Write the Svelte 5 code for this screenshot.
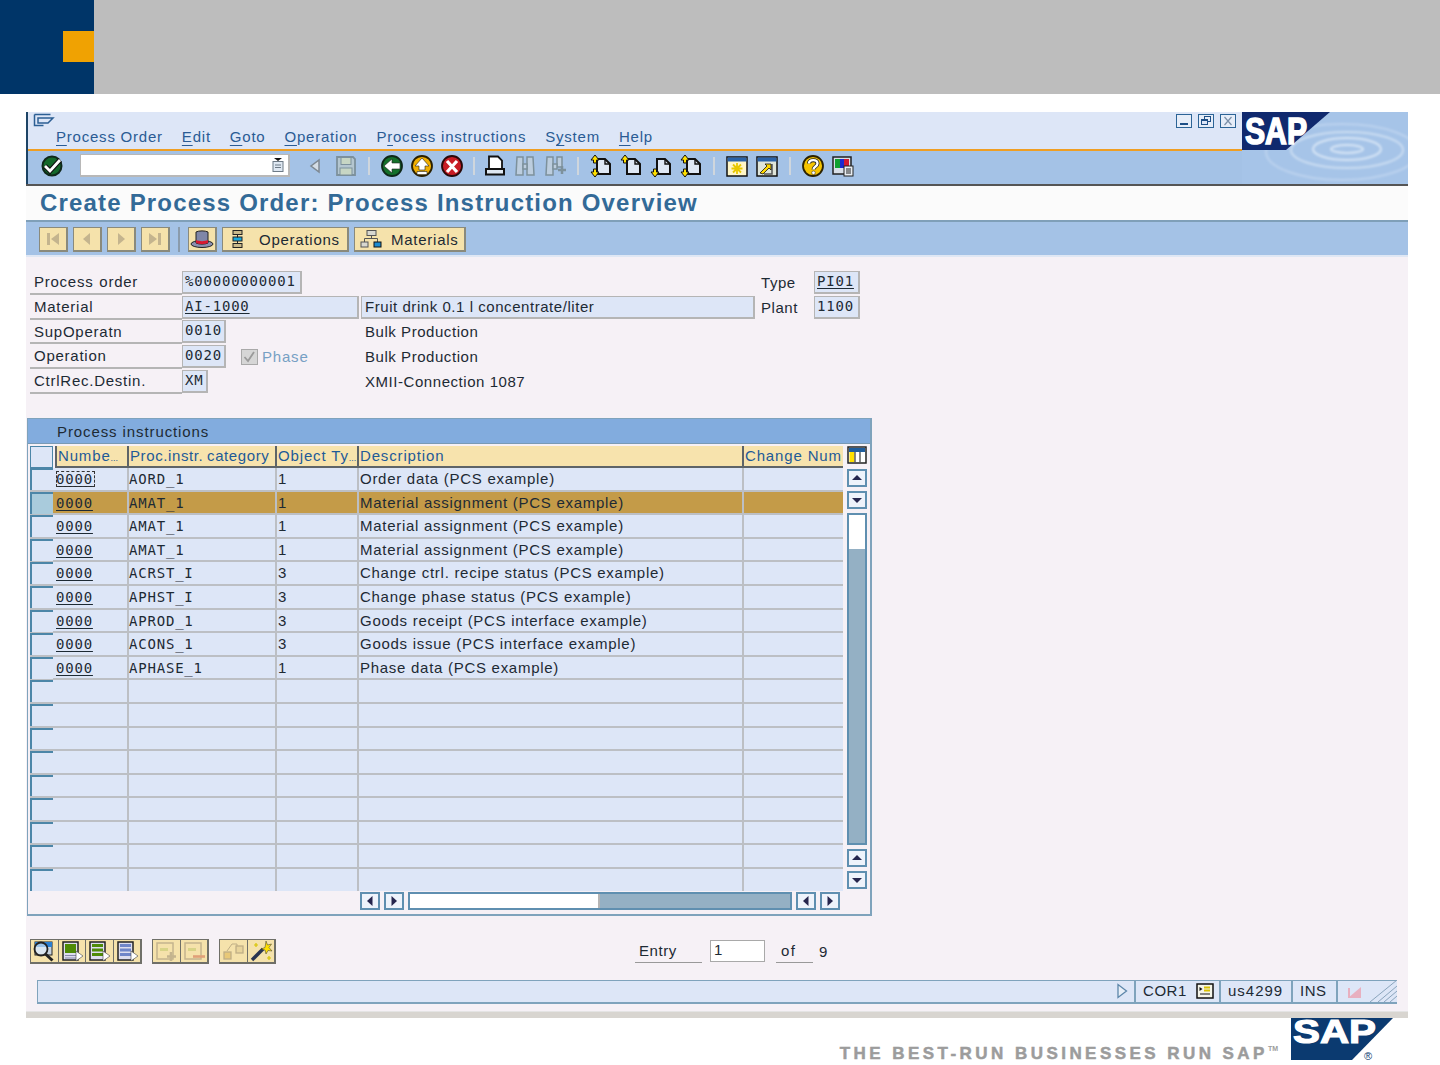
<script>
  const rows = [
    ["0000", "AORD_1", "1", "Order data (PCS example)"],
    ["0000", "AMAT_1", "1", "Material assignment (PCS example)"],
    ["0000", "AMAT_1", "1", "Material assignment (PCS example)"],
    ["0000", "AMAT_1", "1", "Material assignment (PCS example)"],
    ["0000", "ACRST_I", "3", "Change ctrl. recipe status (PCS example)"],
    ["0000", "APHST_I", "3", "Change phase status (PCS example)"],
    ["0000", "APROD_1", "3", "Goods receipt (PCS interface example)"],
    ["0000", "ACONS_1", "3", "Goods issue (PCS interface example)"],
    ["0000", "APHASE_1", "1", "Phase data (PCS example)"],
    ["", "", "", ""],
    ["", "", "", ""],
    ["", "", "", ""],
    ["", "", "", ""],
    ["", "", "", ""],
    ["", "", "", ""],
    ["", "", "", ""],
    ["", "", "", ""],
    ["", "", "", ""],
  ];
  const selected = 1;
</script>

{#snippet page(top, bottom)}
  <svg width="24" height="24" viewBox="0 0 24 24">
    <path d="M8 5h8l5 5v10H8z" fill="#dfe8f5" stroke="#111" stroke-width="2" />
    <path d="M16 5v5h5" fill="none" stroke="#111" stroke-width="1.400" />
    {#if top}
      <path d="M6 1L2 6h2.500v3h3V6H10z" fill="#ffe000" stroke="#111" />
    {/if}
    {#if bottom}
      <path d="M6 23l-4-5h2.500v-3h3v3H10z" fill="#ffe000" stroke="#111" />
    {/if}
  </svg>
{/snippet}

{#snippet sbtn(dir)}
  <span class="sbtn">
    <svg width="14" height="12" viewBox="0 0 14 12">
      {#if dir === "up"}<path d="M2 8l5-5 5 5z" fill="#26264e" />{/if}
      {#if dir === "down"}<path d="M2 4l5 5 5-5z" fill="#26264e" />{/if}
      {#if dir === "left"}<path d="M9.500 1L4 6l5.500 5z" fill="#26264e" />{/if}
      {#if dir === "right"}<path d="M4.500 1L10 6l-5.500 5z" fill="#26264e" />{/if}
    </svg>
  </span>
{/snippet}

{#snippet navBtn(d)}
  <button class="tbtn nav">
    <svg width="20" height="18" viewBox="0 0 20 18"><path {d} fill="#c4b48e" /></svg>
  </button>
{/snippet}

<div class="page">
  <header class="banner"><div class="banner-blue"><span class="banner-square"></span></div></header>

  <main class="window">
    <div class="top">
      <div class="top-left">
        <div class="menubar">
          <svg class="menu-icon" width="22" height="14" viewBox="0 0 22 14">
            <path d="M1.500 1.500h16M1.500 1.500v11h9M5 5h15l-5 5H5z" fill="none" stroke="#2c5f94" stroke-width="1.500" />
          </svg>
          <nav class="menus">
            <span><u>P</u>rocess Order</span>
            <span><u>E</u>dit</span>
            <span><u>G</u>oto</span>
            <span><u>O</u>peration</span>
            <span>P<u>r</u>ocess instructions</span>
            <span>S<u>y</u>stem</span>
            <span><u>H</u>elp</span>
          </nav>
          <div class="win-btns">
            <span class="win-btn"><svg width="14" height="12" viewBox="0 0 14 12"><rect x="3" y="8" width="8" height="2" fill="#1e4f86" /></svg></span>
            <span class="win-btn"><svg width="14" height="12" viewBox="0 0 14 12"><rect x="5.500" y="1.500" width="6" height="5" fill="none" stroke="#1e4f86" /><rect x="2" y="4" width="7" height="6" fill="#1e4f86" /><rect x="3" y="6" width="5" height="3" fill="#dde6f7" /></svg></span>
            <span class="win-btn"><svg width="14" height="12" viewBox="0 0 14 12"><path d="M3.500 2l7 8M10.500 2l-7 8" stroke="#7a8fa8" stroke-width="1.200" /></svg></span>
          </div>
        </div>
        <div class="sysbar">
          <span class="ic">
            <svg width="24" height="24" viewBox="0 0 24 24">
              <circle cx="12" cy="12" r="9.500" fill="#14682a" stroke="#10281a" stroke-width="2" />
              <path d="M5 12l5 5L20 6" fill="none" stroke="#111" stroke-width="5" />
              <path d="M5 12l5 5L20 6" fill="none" stroke="#fff" stroke-width="2.800" />
            </svg>
          </span>
          <div class="cmd">
            <svg width="14" height="16" viewBox="0 0 14 16">
              <path d="M3 1h8L7 4z" fill="#111" />
              <rect x="2" y="4.500" width="10" height="10" fill="#dfe8f2" stroke="#6d7a86" />
              <path d="M4 8h6M4 10.500h6" stroke="#6d7a86" />
            </svg>
          </div>
          <span class="ic first">
            <svg width="24" height="24" viewBox="0 0 24 24"><path d="M15 6v12l-8-6z" fill="#d4dde6" stroke="#7d8892" stroke-width="1.500" /></svg>
          </span>
          <span class="ic">
            <svg width="24" height="24" viewBox="0 0 24 24">
              <path d="M3 3h16l2 2v16H3z" fill="#b4c6d0" stroke="#7d919c" stroke-width="1.800" />
              <rect x="7" y="3.500" width="10" height="7" fill="#c7d6c4" stroke="#7d919c" />
              <rect x="6" y="14" width="12" height="7" fill="#c7d6c4" stroke="#7d919c" />
            </svg>
          </span>
          <i class="sep"></i>
          <span class="ic">
            <svg width="24" height="24" viewBox="0 0 24 24">
              <circle cx="12" cy="12" r="10" fill="#14702a" stroke="#0e2818" stroke-width="1.800" />
              <path d="M4 12l8-7v4h8v6h-8v4z" fill="#fff" stroke="#222" stroke-width=".6" />
            </svg>
          </span>
          <span class="ic">
            <svg width="24" height="24" viewBox="0 0 24 24">
              <circle cx="12" cy="12" r="10" fill="#f0ae00" stroke="#2a2000" stroke-width="1.800" />
              <path d="M12 4l7 8h-4v4H9v-4H5zM7 17.500h10v3H7z" fill="#fff" stroke="#222" stroke-width=".6" />
            </svg>
          </span>
          <span class="ic">
            <svg width="24" height="24" viewBox="0 0 24 24">
              <circle cx="12" cy="12" r="10" fill="#c81c24" stroke="#2a0808" stroke-width="1.800" />
              <path d="M7 7l10 11M17 7L7 18" stroke="#fff" stroke-width="3.200" />
            </svg>
          </span>
          <i class="sep tight"></i>
          <span class="ic">
            <svg width="24" height="24" viewBox="0 0 24 24">
              <path d="M6 2.500h9l4 4V15H6z" fill="#fff" stroke="#111" stroke-width="1.800" />
              <path d="M3 15h18v5.500H3z" fill="#dfe8f2" stroke="#111" stroke-width="2" />
            </svg>
          </span>
          <span class="ic">
            <svg width="24" height="24" viewBox="0 0 24 24" fill="#bccdde" stroke="#7d919c" stroke-width="1.500">
              <path d="M4 3h6v18H3zM14 3h6l1 18h-7z" /><path d="M10 10h4v5h-4z" />
            </svg>
          </span>
          <span class="ic">
            <svg width="24" height="24" viewBox="0 0 24 24" fill="#bccdde" stroke="#7d919c" stroke-width="1.500">
              <path d="M4 3h6v18H3zM14 3h5v10h-5z" /><path d="M10 10h4v5h-4z" /><path d="M19 12v8M15 16h8" stroke-width="2.500" />
            </svg>
          </span>
          <i class="sep"></i>
          <span class="ic">{@render page(true, true)}</span>
          <span class="ic">{@render page(true, false)}</span>
          <span class="ic">{@render page(false, true)}</span>
          <span class="ic">{@render page(true, true)}</span>
          <i class="sep"></i>
          <span class="ic">
            <svg width="24" height="24" viewBox="0 0 24 24">
              <rect x="2" y="3" width="20" height="19" fill="#fff6c8" stroke="#111" stroke-width="1.500" />
              <rect x="2.500" y="3.500" width="19" height="4" fill="#2a62a8" />
              <path d="M12 9v11M6.500 14.500h11M8 10.500l8 8M16 10.500l-8 8" stroke="#e8c800" stroke-width="1.800" />
            </svg>
          </span>
          <span class="ic">
            <svg width="24" height="24" viewBox="0 0 24 24">
              <rect x="2" y="3" width="20" height="19" fill="#dfe5da" stroke="#111" stroke-width="1.500" />
              <rect x="2.500" y="3.500" width="19" height="4" fill="#2a62a8" />
              <path d="M17 10v10H9" fill="none" stroke="#555" stroke-width="1.500" />
              <path d="M5 19l7-7-2-2h6v6l-2-2-6 6z" fill="#ffd800" stroke="#111" stroke-width=".8" />
            </svg>
          </span>
          <i class="sep"></i>
          <span class="ic">
            <svg width="24" height="24" viewBox="0 0 24 24">
              <circle cx="12" cy="12" r="10" fill="#f6c400" stroke="#2c2200" stroke-width="1.800" />
              <path d="M8 9.500c0-4.500 8.500-4.500 8.500 0 0 3-4 3-4 6" fill="none" stroke="#222" stroke-width="4" />
              <path d="M8 9.500c0-4.500 8.500-4.500 8.500 0 0 3-4 3-4 6" fill="none" stroke="#fff" stroke-width="2.400" />
              <circle cx="12.500" cy="18.800" r="1.800" fill="#fff" stroke="#222" stroke-width=".5" />
            </svg>
          </span>
          <span class="ic">
            <svg width="24" height="24" viewBox="0 0 24 24">
              <rect x="2" y="3" width="18" height="17" fill="#d8dfe8" stroke="#222" stroke-width="1.500" />
              <rect x="4" y="5" width="5" height="9" fill="#10a030" />
              <rect x="9" y="5" width="4" height="9" fill="#1a2ad0" />
              <rect x="13" y="5" width="5" height="9" fill="#d01830" />
              <rect x="13" y="12" width="9" height="10" fill="#e8edf2" stroke="#222" />
              <path d="M15 15h5M15 17h5M15 19h5" stroke="#222" />
            </svg>
          </span>
        </div>
      </div>
      <div class="logo">
        <svg width="166" height="72" viewBox="0 0 166 72">
          <defs>
            <filter id="soft"><feGaussianBlur stdDeviation="1.300" /></filter>
          </defs>
          <rect width="166" height="72" fill="#a6c4e8" />
          <g fill="none" stroke="#e4eef9" filter="url(#soft)">
            <ellipse cx="105" cy="37" rx="16" ry="4" stroke-width="2" opacity=".8" />
            <ellipse cx="105" cy="37" rx="34" ry="11" stroke-width="2" opacity=".8" />
            <ellipse cx="105" cy="38" rx="56" ry="18" stroke-width="2" opacity=".6" />
            <ellipse cx="100" cy="40" rx="76" ry="28" stroke-width="2" opacity=".35" />
          </g>
          <path d="M0 0h88L44 38H0z" fill="#10296e" />
          <text class="logo-text" x="3" y="32" font-size="37" textLength="62" lengthAdjust="spacingAndGlyphs">SAP</text>
        </svg>
      </div>
    </div>

    <h1 class="title">Create Process Order: Process Instruction Overview</h1>

    <div class="appbar">
      {@render navBtn("M4 3h3v12H4zM16 3v12L8 9z")}
      {@render navBtn("M13 3v12L6 9z")}
      {@render navBtn("M7 3v12l7-6z")}
      {@render navBtn("M4 3v12l8-6zM13 3h3v12h-3z")}
      <i class="sep tall"></i>
      <button class="tbtn hat">
        <svg width="24" height="20" viewBox="0 0 24 20">
          <ellipse cx="12" cy="15" rx="11" ry="3.500" fill="#8b8fb0" stroke="#222" />
          <path d="M6 3c3-1.500 9-1.500 12 0v11c-3 1.500-9 1.500-12 0z" fill="#7f86a8" stroke="#222" />
          <path d="M6 11c3 1.500 9 1.500 12 0v3c-3 1.500-9 1.500-12 0z" fill="#d81830" />
        </svg>
      </button>
      <button class="tbtn wide ops">
        <svg width="20" height="20" viewBox="0 0 20 20">
          <rect x="5" y="1.500" width="9" height="4" fill="#c9b98a" stroke="#222" />
          <rect x="5" y="8" width="9" height="4" fill="#19a8dc" stroke="#222" />
          <rect x="5" y="14.500" width="9" height="4" fill="#c9b98a" stroke="#222" />
          <path d="M9.500 5.500v3M9.500 12v3" stroke="#222" />
        </svg>
        Operations
      </button>
      <button class="tbtn wide mats">
        <svg width="22" height="20" viewBox="0 0 22 20">
          <rect x="7" y="1.500" width="9" height="5" fill="#d8d8d0" stroke="#555" />
          <path d="M11.500 6.500v3M4.500 13V9.500h13V13" fill="none" stroke="#555" />
          <rect x="1" y="13" width="7" height="5" fill="#d8d8d0" stroke="#555" />
          <rect x="14" y="13" width="7" height="5" fill="#1b8ad0" stroke="#111" />
        </svg>
        Materials
      </button>
    </div>

    <div class="content">
      <div class="form">
        <span class="lbl">Process order</span>
        <div class="fc"><span class="fld mono w120">%00000000001</span></div>
        <span></span>
        <span class="lbl2">Type</span>
        <span class="fld mono link">PI01</span>

        <span class="lbl">Material</span>
        <div class="fc"><span class="fld mono link long">AI-1000</span></div>
        <span class="fld desc">Fruit drink 0.1 l concentrate/liter</span>
        <span class="lbl2">Plant</span>
        <span class="fld mono">1100</span>

        <span class="lbl">SupOperatn</span>
        <div class="fc"><span class="fld mono w44">0010</span></div>
        <span class="plain">Bulk Production</span>
        <span></span><span></span>

        <span class="lbl">Operation</span>
        <div class="fc">
          <span class="fld mono w44">0020</span>
          <span class="check"><svg width="14" height="14" viewBox="0 0 14 14"><path d="M2.500 7l3.500 4 6-9" fill="none" stroke="#9a9a9a" stroke-width="1.800" /></svg></span>
          <span class="phase">Phase</span>
        </div>
        <span class="plain">Bulk Production</span>
        <span></span><span></span>

        <span class="lbl">CtrlRec.Destin.</span>
        <div class="fc"><span class="fld mono w26">XM</span></div>
        <span class="plain">XMII-Connection 1087</span>
        <span></span><span></span>
      </div>

      <section class="tbl">
        <div class="tbl-title">Process instructions</div>
        <div class="tbl-main">
          <div class="tbl-left">
            <div class="row head">
              <span class="sel"></span>
              <span class="hc">Numbe<em>...</em></span>
              <span class="hc cat">Proc.instr. category</span>
              <span class="hc">Object Ty<em>...</em></span>
              <span class="hc">Description</span>
              <span class="hc">Change Num</span>
            </div>
            <div class="tbl-body">
              {#each rows as r, i}
                <div class="row" class:on={i === selected}>
                  <span class="sel"></span>
                  <span class="c mono"><span class="num" class:focus={i === 0}>{r[0]}</span></span>
                  <span class="c mono">{r[1]}</span>
                  <span class="c">{r[2]}</span>
                  <span class="c">{r[3]}</span>
                  <span class="c"></span>
                </div>
              {/each}
            </div>
          </div>
          <div class="vscroll">
            <span class="cfg">
              <svg width="20" height="18" viewBox="0 0 20 18">
                <rect x="1" y="1" width="18" height="16" fill="#fff" stroke="#222" stroke-width="1.500" />
                <rect x="2" y="2" width="16" height="4" fill="#1f5d9c" />
                <rect x="2.500" y="6" width="5" height="10" fill="#ffe000" />
                <path d="M8 6v11M13 6v11" stroke="#555" stroke-width="1.400" />
              </svg>
            </span>
            {@render sbtn("up")}
            {@render sbtn("down")}
            <div class="vtrack"><span class="vthumb"></span></div>
            {@render sbtn("up")}
            {@render sbtn("down")}
          </div>
        </div>
        <div class="hscroll">
          {@render sbtn("left")}
          {@render sbtn("right")}
          <div class="htrack"><span class="hthumb"></span></div>
          {@render sbtn("left")}
          {@render sbtn("right")}
        </div>
      </section>

      <div class="bottom">
        <div class="bgroups">
          <div class="bgroup">
            <button class="bbtn"><svg width="24" height="22" viewBox="0 0 24 22"><rect x="3" y="2" width="17" height="13" fill="#c8d4e0" stroke="#222" /><rect x="3" y="2" width="17" height="5" fill="#2b7fd0" /><circle cx="9" cy="9" r="6.500" fill="#e8f2fa" fill-opacity=".6" stroke="#222" stroke-width="1.800" /><path d="M13.500 14l7 6.500" stroke="#222" stroke-width="3" /></svg></button>
            <button class="bbtn"><svg width="24" height="22" viewBox="0 0 24 22"><rect x="3" y="2" width="15" height="18" fill="#dde" stroke="#222" stroke-width="1.500" /><rect x="5" y="4" width="11" height="9" fill="#4e8a06" /><path d="M5 15.500h11M5 18h11" stroke="#88a" /><path d="M16 11v10l7-5z" fill="#fff" stroke="#444" stroke-width=".6" /></svg></button>
            <button class="bbtn"><svg width="24" height="22" viewBox="0 0 24 22"><rect x="3" y="2" width="15" height="18" fill="#dde" stroke="#222" stroke-width="1.500" /><rect x="5" y="4" width="11" height="3" fill="#4e8a06" /><rect x="5" y="8.500" width="11" height="3" fill="#4e8a06" /><rect x="5" y="13" width="11" height="3" fill="#4e8a06" /><path d="M16 11v10l7-5z" fill="#fff" stroke="#444" stroke-width=".6" /></svg></button>
            <button class="bbtn"><svg width="24" height="22" viewBox="0 0 24 22"><rect x="3" y="2" width="15" height="18" fill="#dde" stroke="#222" stroke-width="1.500" /><rect x="5" y="4" width="11" height="3" fill="#6f85c8" /><rect x="5" y="8.500" width="11" height="3" fill="#6f85c8" /><rect x="5" y="13" width="11" height="3" fill="#6f85c8" /><path d="M16 11v10l7-5z" fill="#fff" stroke="#444" stroke-width=".6" /></svg></button>
          </div>
          <div class="bgroup">
            <button class="bbtn"><svg width="24" height="22" viewBox="0 0 24 22"><rect x="3" y="3" width="16" height="16" fill="none" stroke="#c4b48e" stroke-width="1.500" /><rect x="6" y="8" width="8" height="3" fill="#d8d488" /><path d="M17 12v9M13 16.500h9" stroke="#c4b48e" stroke-width="2.600" /></svg></button>
            <button class="bbtn"><svg width="24" height="22" viewBox="0 0 24 22"><rect x="3" y="3" width="16" height="16" fill="none" stroke="#c4b48e" stroke-width="1.500" /><rect x="6" y="8" width="8" height="3" fill="#d8d488" /><path d="M11 16.500h12" stroke="#e0a078" stroke-width="2.600" /></svg></button>
          </div>
          <div class="bgroup">
            <button class="bbtn"><svg width="24" height="22" viewBox="0 0 24 22"><rect x="3" y="12" width="7" height="7" fill="#e8c878" stroke="#bfae86" stroke-width="1.300" /><rect x="15" y="6" width="7" height="7" fill="#e8d49c" stroke="#bfae86" stroke-width="1.300" /><path d="M6 11l5-7h5v2" fill="none" stroke="#bfae86" /></svg></button>
            <button class="bbtn"><svg width="24" height="22" viewBox="0 0 24 22"><path d="M3 20L14 9" stroke="#2a3550" stroke-width="3.400" /><path d="M17 1l1.500 4 4-1-2.500 3.500L23 11l-4-.5L17 14l-1-4-4-1 4-1.500z" fill="#ffe000" stroke="#333" stroke-width=".5" /><path d="M7 3v4M5 5h4M20 16v4M18 18h4" stroke="#d8c400" stroke-width="1.200" /></svg></button>
          </div>
        </div>
        <div class="entry">
          <span class="e-lbl">Entry</span>
          <span class="e-input">1</span>
          <span class="e-of">of</span>
          <span class="e-n">9</span>
        </div>
      </div>

      <div class="status">
        <span class="st-fill">
          <svg width="12" height="16" viewBox="0 0 12 16"><path d="M2 1.500v13L10.500 8z" fill="#e8eff8" stroke="#5d87aa" stroke-width="1.300" /></svg>
        </span>
        <span class="st st-sys">COR1
          <svg width="18" height="16" viewBox="0 0 18 16"><rect x="1" y="1" width="16" height="14" fill="#f4f4e8" stroke="#111" stroke-width="1.500" /><path d="M3.500 4v4l3-2z" fill="#111" /><path d="M8 4.500h6M8 7.500h6" stroke="#d8c000" stroke-width="2" /><path d="M4 11h10" stroke="#111" /></svg>
        </span>
        <span class="st st-user">us4299</span>
        <span class="st st-ins">INS</span>
        <span class="st st-lock">
          <svg width="20" height="18" viewBox="0 0 20 18"><path d="M3 16L16 5v11z" fill="#e8b0c0" /><path d="M4 6v10" stroke="#e8b0c0" stroke-width="2" /></svg>
        </span>
        <span class="st-grip">
          <svg width="27" height="22" viewBox="0 0 27 22"><path d="M0 22L27 0M8 22L27 6M14 22L27 11M20 22L27 16" fill="none" stroke="#8aa4bc" /></svg>
        </span>
      </div>
    </div>
  </main>

  <footer class="foot">
    <span class="slogan">THE BEST-RUN BUSINESSES RUN SAP<sup>TM</sup></span>
    <svg class="foot-logo" width="102" height="42" viewBox="0 0 102 42">
      <path d="M0 0h102L61 42H0z" fill="#0b3a70" />
      <text class="logo-text foot-sap" x="2" y="25" font-size="34" textLength="83" lengthAdjust="spacingAndGlyphs">SAP</text>
      <text class="reg" x="73" y="42" font-size="11">®</text>
    </svg>
  </footer>
</div>

<style>
  :global(body) {
    margin: 0;
    background: #fff;
    overflow: hidden;
  }

  .page {
    width: 1440px;
    height: 1065px;
    overflow: hidden;
    font-family: "Liberation Sans", Arial, sans-serif;
    font-size: 15px;
    letter-spacing: 0.55px;
    color: #1d2a34;
  }

  .mono {
    font-family: "DejaVu Sans Mono", "Liberation Mono", monospace;
    font-size: 14px;
    letter-spacing: 0.8px;
  }

  .banner {
    height: 94px;
    background: #bdbdbd;
  }

  .banner-blue {
    width: 94px;
    height: 94px;
    background: #003568;
    display: flex;
    justify-content: flex-end;
    padding-top: 31px;
    box-sizing: border-box;
  }

  .banner-square {
    width: 31px;
    height: 31px;
    background: #f0a202;
  }

  .window {
    margin: 18px 0 0 26px;
    width: 1382px;
    height: 900px;
    background: #f6f1f6;
    display: flex;
    flex-direction: column;
    border-bottom: 6px solid #d8d5d0;
  }

  .top {
    display: flex;
    height: 74px;
    border-bottom: 2px solid #555;
    box-sizing: border-box;
  }

  .top-left {
    flex: 1;
    border-left: 2px solid #1d4466;
    display: flex;
    flex-direction: column;
  }

  .logo {
    width: 166px;
    height: 72px;
  }

  .logo svg {
    display: block;
  }

  .logo-text {
    font-family: "Liberation Sans", sans-serif;
    font-weight: 700;
    fill: #fff;
    stroke: #fff;
    stroke-width: 1.600px;
    letter-spacing: 0;
  }

  .foot-sap {
    stroke-width: 1.200px;
  }

  .menubar {
    height: 37px;
    background: #dde6f7;
    border-bottom: 2px solid #ef9e22;
    display: flex;
    align-items: flex-start;
    padding-left: 5px;
  }

  .menu-icon {
    margin-top: 1px;
    width: 22px;
  }

  .menus {
    display: flex;
    gap: 19px;
    margin: 16px 0 0 1px;
    color: #2a5b94;
    letter-spacing: 0.78px;
  }

  .menus u {
    text-underline-offset: 3px;
  }

  .win-btns {
    margin: 2px 0 0 auto;
    padding-right: 6px;
    display: flex;
    gap: 6px;
  }

  .win-btn {
    width: 14px;
    height: 12px;
    border: 1px solid #2c6496;
    display: flex;
    background: #e6edf8;
  }

  .sysbar {
    height: 33px;
    box-sizing: border-box;
    background: #a4c2e6;
    display: flex;
    align-items: center;
    padding: 0 0 4px 8.500px;
  }

  .ic {
    width: 30px;
    height: 24px;
    display: flex;
    justify-content: center;
    flex: none;
  }

  .ic.first {
    margin-left: 11px;
  }

  .sep {
    width: 2px;
    height: 18px;
    margin: 0 7px;
    background: #cfd6dd;
    flex: none;
  }

  .sep.tight {
    margin: 0 5.500px;
  }

  .sep.tall {
    height: 25px;
    margin: 0 3px 0 3px;
    background: #8a9bac;
  }

  .cmd {
    width: 210px;
    height: 23px;
    margin-left: 13.500px;
    background: #fff;
    box-sizing: border-box;
    border: 1px solid #b8b8b8;
    border-right-width: 2px;
    border-bottom-width: 2px;
    display: flex;
    align-items: center;
    justify-content: flex-end;
    padding-right: 3px;
  }

  .title {
    margin: 0;
    height: 34px;
    box-sizing: border-box;
    background: #fbfbfb;
    padding: 3px 0 0 14px;
    font-size: 24px;
    line-height: 28px;
    font-weight: 700;
    letter-spacing: 1.180px;
    color: #336a97;
  }

  .appbar {
    height: 37px;
    box-sizing: border-box;
    background: #a4c2e6;
    border-top: 2px solid #7f9fb8;
    border-bottom: 2px solid #dfe7f4;
    display: flex;
    align-items: center;
    padding: 2px 0 0 13px;
    gap: 5px;
  }

  .tbtn {
    height: 25px;
    box-sizing: border-box;
    padding: 0;
    background: #f5e2ab;
    border: 1px solid #8a8a7c;
    border-right-width: 2px;
    border-bottom-width: 2px;
    display: flex;
    align-items: center;
    justify-content: center;
    font: inherit;
    letter-spacing: 0.75px;
    color: #1d2a34;
  }

  .nav,
  .hat {
    width: 29px;
  }

  .wide {
    justify-content: flex-start;
    padding-left: 5px;
  }

  .ops {
    width: 127px;
    gap: 11px;
  }

  .mats {
    width: 112px;
    gap: 9px;
  }

  .content {
    flex: 1;
    display: flex;
    flex-direction: column;
    border-bottom: 1px solid #e4e4e4;
  }

  .form {
    margin: 13px 0 0 4px;
    display: grid;
    grid-template-columns: 152px 179px 394px 59px 46px;
    grid-auto-rows: 24.800px;
    width: 830px;
    align-items: center;
  }

  .lbl {
    height: 100%;
    box-sizing: border-box;
    padding: 2px 0 0 4px;
    border-bottom: 2px solid #b5b5b5;
    line-height: 19px;
    letter-spacing: 0.75px;
    word-spacing: 1px;
  }

  .lbl2 {
    padding-left: 6px;
  }

  .fc {
    display: flex;
    align-items: center;
    height: 100%;
  }

  .fld {
    height: 23px;
    box-sizing: border-box;
    display: block;
    background: #dde6f7;
    border: 1px solid #b5b5b5;
    border-right-width: 2px;
    border-bottom-width: 2px;
    padding-left: 3px;
    line-height: 19px;
    white-space: nowrap;
  }

  .fld.mono {
    padding-left: 2px;
  }

  .w120 {
    width: 120px;
  }

  .w44 {
    width: 44px;
  }

  .w26 {
    width: 26px;
  }

  .fld.long {
    width: 177px;
  }

  .desc {
    line-height: 20px;
  }

  .link {
    text-decoration: underline;
    text-underline-offset: 2px;
  }

  .plain {
    padding-left: 4px;
  }

  .check {
    margin-left: 15px;
    width: 17px;
    height: 16px;
    box-sizing: border-box;
    background: #d6d6d6;
    border: 1px solid #a9a9a9;
    display: flex;
  }

  .phase {
    margin-left: 4px;
    color: #76a0c4;
    letter-spacing: 0.8px;
  }

  .tbl {
    margin: 24px 0 0 1px;
    width: 845px;
    height: 498px;
    box-sizing: border-box;
    border: 1px solid #7fa3bc;
    border-width: 1px 2px 2px 1px;
    display: flex;
    flex-direction: column;
  }

  .tbl-title {
    height: 25px;
    flex: none;
    background: #82acde;
    border-bottom: 1px solid #7a9ab4;
    box-sizing: border-box;
    padding-left: 29px;
    line-height: 25px;
    letter-spacing: 0.9px;
  }

  .tbl-main {
    display: flex;
    padding: 2px 0 0 2px;
    height: 445px;
    box-sizing: border-box;
    flex: none;
  }

  .tbl-left {
    width: 813px;
    flex: none;
  }

  .row {
    display: grid;
    grid-template-columns: 25px 72px 148px 82px 385px 101px;
    height: 23.600px;
    box-sizing: border-box;
    background: #dde6f7;
    border-bottom: 2px solid #bcbfc4;
    letter-spacing: 0.72px;
  }

  .tbl-body {
    height: 423px;
    overflow: hidden;
  }

  .row.head {
    height: 22px;
    background: none;
    border: 0;
    color: #1e5a98;
    letter-spacing: 0.85px;
  }

  .row.on {
    background: #c49b48;
  }

  .sel {
    background: #dde6f7;
    border: 1px solid #4c86a8;
    border-width: 2px 0 0 2px;
    margin-right: 2px;
  }

  .row.on .sel {
    background: #a9cbdc;
  }

  .head .sel {
    border-width: 1px;
  }

  .hc {
    background: #f7e3ad;
    border-left: 2px solid #5e6468;
    border-bottom: 2px solid #5e6468;
    padding-left: 1px;
    line-height: 20px;
    overflow: hidden;
    white-space: nowrap;
  }

  .hc.cat {
    word-spacing: -1px;
    letter-spacing: 0.6px;
  }

  .hc em {
    font-style: normal;
    font-size: 9px;
    letter-spacing: 0;
  }

  .c {
    border-left: 2px solid #bcbfc4;
    padding-left: 1px;
    line-height: 22px;
    white-space: nowrap;
  }

  .c.mono {
    padding-left: 0;
  }

  .sel + .c {
    border-left: 0;
    padding-left: 1px;
  }

  .num {
    text-decoration: underline;
    text-underline-offset: 2px;
  }

  .num:empty {
    display: none;
  }

  .focus {
    outline: 1px dashed #333;
    outline-offset: -1px;
    padding-right: 2px;
  }

  .vscroll {
    margin-left: 2px;
    width: 24px;
    display: flex;
    flex-direction: column;
    align-items: center;
    gap: 4px;
  }

  .cfg {
    height: 19px;
    display: flex;
  }

  .sbtn {
    width: 20px;
    height: 18px;
    box-sizing: border-box;
    background: #eef3fb;
    border: 2px solid #5f8fb0;
    display: flex;
    align-items: center;
    justify-content: center;
    flex: none;
  }

  .vtrack {
    width: 20px;
    height: 332px;
    box-sizing: border-box;
    background: #94b0c4;
    border: 2px solid #5f8fb0;
    flex: none;
  }

  .vthumb {
    display: block;
    height: 34px;
    background: #fff;
  }

  .hscroll {
    display: flex;
    align-items: center;
    gap: 4px;
    margin-left: 332px;
    margin-top: 3px;
  }

  .htrack {
    width: 384px;
    height: 18px;
    box-sizing: border-box;
    background: #94b0c4;
    border: 2px solid #5f8fb0;
  }

  .hthumb {
    display: block;
    width: 188px;
    height: 100%;
    background: #fff;
    border-right: 2px solid #b5b5b5;
  }

  .bottom {
    margin: 23px 0 0 4px;
    display: flex;
    align-items: center;
    height: 25px;
  }

  .bgroups {
    display: flex;
    gap: 10px;
    width: 605px;
  }

  .bgroup {
    display: flex;
    background: #6f6f68;
    padding: 1px 2px 2px 1px;
    gap: 1px;
  }

  .bbtn {
    width: 26.500px;
    height: 22px;
    padding: 0;
    background: #f5e2ab;
    border: 0;
    display: flex;
    align-items: center;
    justify-content: center;
  }

  .entry {
    display: flex;
    align-items: center;
  }

  .e-lbl {
    width: 63px;
    padding-left: 4px;
    border-bottom: 1px solid #999;
    height: 23px;
    line-height: 24px;
  }

  .e-input {
    margin-left: 8px;
    width: 55px;
    height: 22px;
    box-sizing: border-box;
    background: #fff;
    border: 1px solid #a9a9a9;
    padding-left: 3px;
    line-height: 18px;
  }

  .e-of {
    margin-left: 11px;
    width: 32px;
    padding-left: 5px;
    border-bottom: 1px solid #999;
    height: 23px;
    line-height: 24px;
    letter-spacing: 1.500px;
  }

  .e-n {
    margin-left: 6px;
  }

  .status {
    margin: 16px 0 0 11px;
    width: 1360px;
    height: 24px;
    box-sizing: border-box;
    background: #dde6f7;
    border: 1px solid #7fa3bc;
    border-width: 1px 0 2px 1px;
    display: flex;
    align-items: center;
  }

  .st-fill {
    flex: 1;
    display: flex;
    justify-content: flex-end;
    padding-right: 6px;
  }

  .st {
    height: 100%;
    box-sizing: border-box;
    border-left: 2px solid #7fa3bc;
    display: flex;
    align-items: center;
    padding-left: 7px;
    line-height: 20px;
  }

  .st-sys {
    width: 85px;
    gap: 9px;
  }

  .st-user {
    width: 72px;
    letter-spacing: 1px;
  }

  .st-ins {
    width: 45px;
  }

  .st-lock {
    width: 34px;
  }

  .st-grip {
    width: 27px;
    height: 22px;
    flex: none;
  }

  .foot {
    height: 47px;
    box-sizing: border-box;
    display: flex;
    justify-content: flex-end;
    padding-right: 47px;
  }

  .slogan {
    margin: 26px 13px 0 0;
    height: 20px;
    font-weight: 700;
    font-size: 17px;
    line-height: 20px;
    letter-spacing: 3.450px;
    color: #9c9c9c;
    white-space: nowrap;
    -webkit-text-stroke: 0.5px #9c9c9c;
  }

  .slogan sup {
    font-size: 7px;
    letter-spacing: 0;
    vertical-align: 8px;
    line-height: 0;
    -webkit-text-stroke: 0;
  }

  .foot-logo {
    display: block;
  }

  .reg {
    fill: #0b3a70;
    font-family: "Liberation Sans", sans-serif;
    letter-spacing: 0;
  }
</style>
